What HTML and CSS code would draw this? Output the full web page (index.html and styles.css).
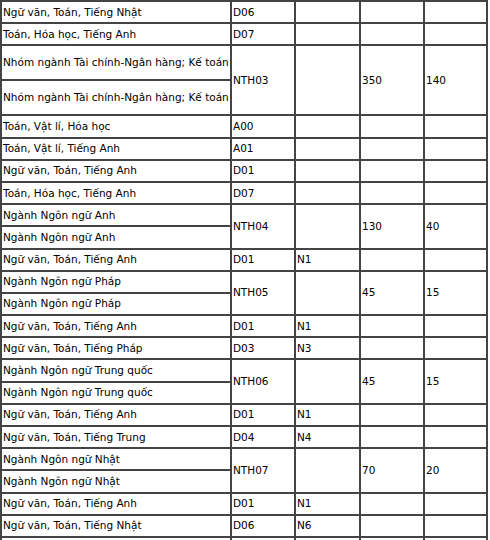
FILE: index.html
```html
<!DOCTYPE html>
<html lang="vi">
<head>
<meta charset="utf-8">
<link rel="stylesheet" href="styles.css">
</head>
<body>
<table class="grid">
<colgroup><col class="c1"><col class="c2"><col class="c3"><col class="c4"><col class="c5"></colgroup>
<tbody>
<tr><td>Ngữ văn, Toán, Tiếng Nhật</td><td>D06</td><td></td><td></td><td></td></tr>
<tr><td>Toán, Hóa học, Tiếng Anh</td><td>D07</td><td></td><td></td><td></td></tr>
<tr class="tall"><td>Nhóm ngành Tài chính-Ngân hàng; Kế toán</td><td rowspan="2">NTH03</td><td rowspan="2"></td><td rowspan="2">350</td><td rowspan="2">140</td></tr>
<tr class="tall"><td>Nhóm ngành Tài chính-Ngân hàng; Kế toán</td></tr>
<tr><td>Toán, Vật lí, Hóa học</td><td>A00</td><td></td><td></td><td></td></tr>
<tr><td>Toán, Vật lí, Tiếng Anh</td><td>A01</td><td></td><td></td><td></td></tr>
<tr><td>Ngữ văn, Toán, Tiếng Anh</td><td>D01</td><td></td><td></td><td></td></tr>
<tr><td>Toán, Hóa học, Tiếng Anh</td><td>D07</td><td></td><td></td><td></td></tr>
<tr><td>Ngành Ngôn ngữ Anh</td><td rowspan="2">NTH04</td><td rowspan="2"></td><td rowspan="2">130</td><td rowspan="2">40</td></tr>
<tr><td>Ngành Ngôn ngữ Anh</td></tr>
<tr><td>Ngữ văn, Toán, Tiếng Anh</td><td>D01</td><td>N1</td><td></td><td></td></tr>
<tr><td>Ngành Ngôn ngữ Pháp</td><td rowspan="2">NTH05</td><td rowspan="2"></td><td rowspan="2">45</td><td rowspan="2">15</td></tr>
<tr><td>Ngành Ngôn ngữ Pháp</td></tr>
<tr><td>Ngữ văn, Toán, Tiếng Anh</td><td>D01</td><td>N1</td><td></td><td></td></tr>
<tr><td>Ngữ văn, Toán, Tiếng Pháp</td><td>D03</td><td>N3</td><td></td><td></td></tr>
<tr><td>Ngành Ngôn ngữ Trung quốc</td><td rowspan="2">NTH06</td><td rowspan="2"></td><td rowspan="2">45</td><td rowspan="2">15</td></tr>
<tr><td>Ngành Ngôn ngữ Trung quốc</td></tr>
<tr><td>Ngữ văn, Toán, Tiếng Anh</td><td>D01</td><td>N1</td><td></td><td></td></tr>
<tr><td>Ngữ văn, Toán, Tiếng Trung</td><td>D04</td><td>N4</td><td></td><td></td></tr>
<tr><td>Ngành Ngôn ngữ Nhật</td><td rowspan="2">NTH07</td><td rowspan="2"></td><td rowspan="2">70</td><td rowspan="2">20</td></tr>
<tr><td>Ngành Ngôn ngữ Nhật</td></tr>
<tr><td>Ngữ văn, Toán, Tiếng Anh</td><td>D01</td><td>N1</td><td></td><td></td></tr>
<tr><td>Ngữ văn, Toán, Tiếng Nhật</td><td>D06</td><td>N6</td><td></td><td></td></tr>
<tr><td></td><td></td><td></td><td></td><td></td></tr>
</tbody>
</table>
</body>
</html>
```
FILE: styles.css
```css
html, body {
  margin: 0;
  padding: 0;
  background: #ffffff;
}
.grid {
  border-collapse: separate;
  border-spacing: 0;
  table-layout: fixed;
  width: 488px;
  border-top: 2px solid #444444;
  border-left: 2px solid #444444;
  font-family: "DejaVu Sans", sans-serif;
  font-size: 10.5px;
  color: #000000;
}
.c1 { width: 230px; }
.c2 { width: 64px; }
.c3 { width: 65px; }
.c4 { width: 64px; }
.c5 { width: 63px; }
.grid tr { height: 22.2px; }
.grid tr.tall { height: 35px; }
.grid td {
  box-sizing: border-box;
  padding: 0 0 0 1px;
  border-right: 2px solid #444444;
  border-bottom: 2px solid #444444;
  vertical-align: middle;
  white-space: nowrap;
  overflow: hidden;
  line-height: 13px;
}
```
